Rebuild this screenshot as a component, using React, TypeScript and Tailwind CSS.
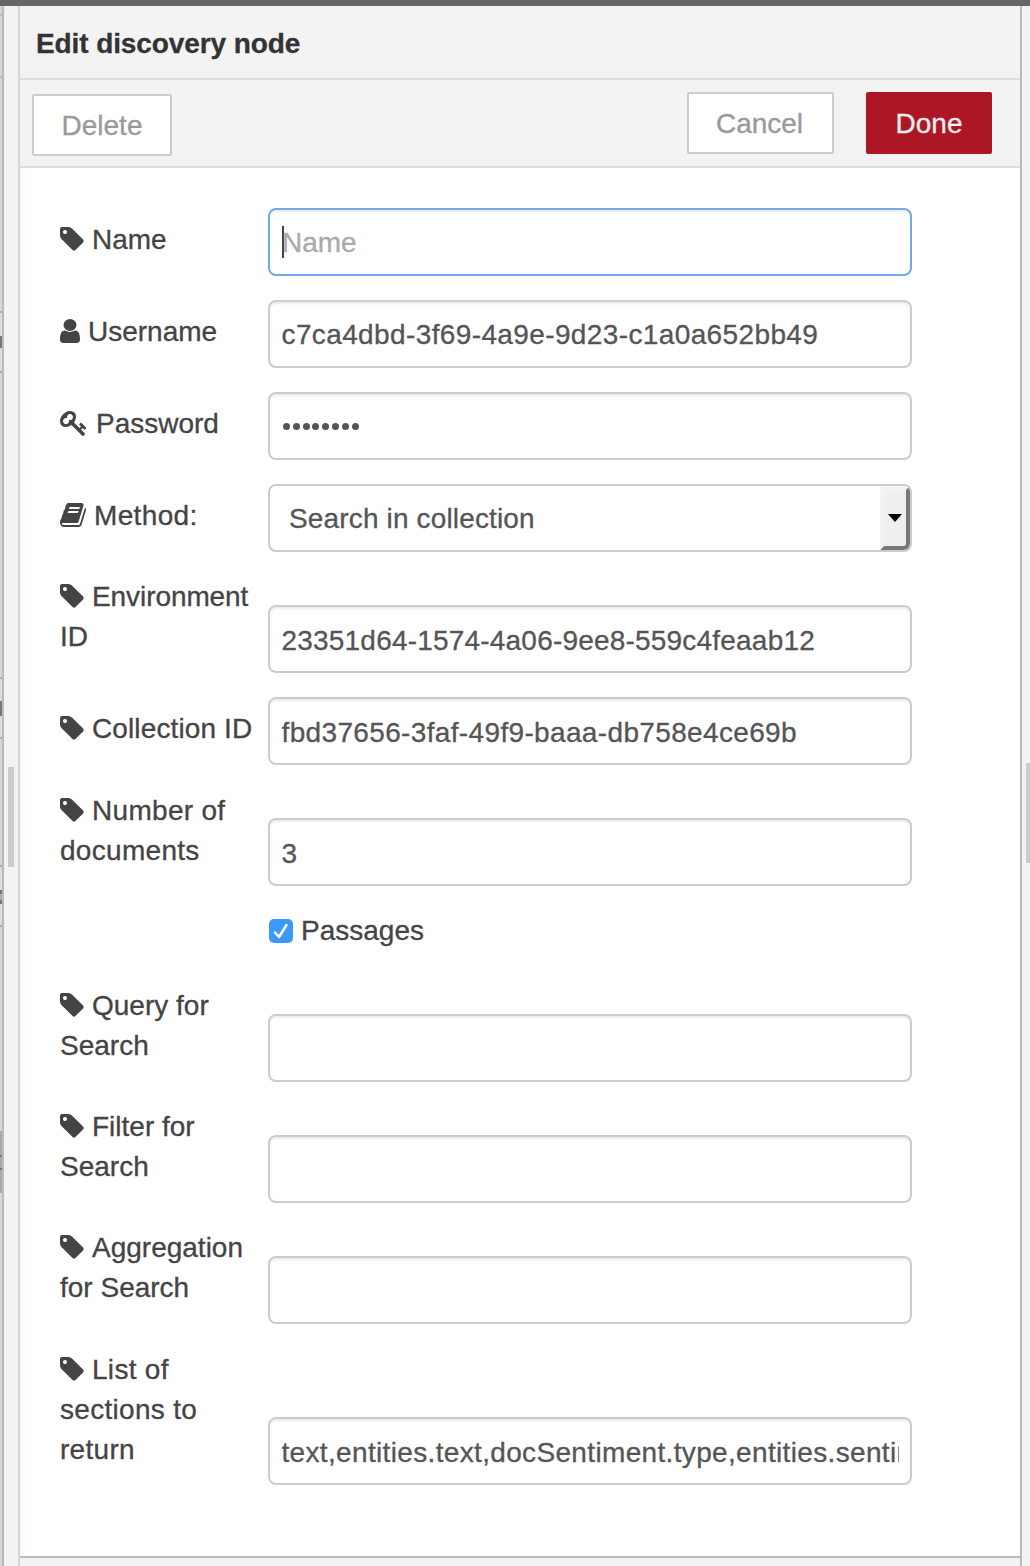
import React from "react";

const TAG =
  "M448 448q0-53-37.5-90.5t-90.5-37.5-90.5 37.5-37.5 90.5 37.5 90.5 90.5 37.5 90.5-37.5 37.5-90.5zm1067 576q0 53-37 90l-491 492q-39 37-91 37-53 0-90-37l-715-716q-38-37-64.5-101t-26.5-117v-416q0-52 38-90t90-38h416q53 0 117 26.5t102 64.5l715 714q37 39 37 91z";
const USER =
  "M1056 512a416 384 0 1 1-832 0a416 384 0 1 1 832 0zM320 870Q640 1060 960 870C1210 870 1280 1130 1280 1420Q1280 1664 1060 1664H220Q0 1664 0 1420C0 1130 70 870 320 870z";
const KEY =
  "M832 512q0-80-56-136t-136-56-136 56-56 136q0 42 19 83-41-19-83-19-80 0-136 56t-56 136 56 136 136 56 136-56 56-136q0-42-19-83 41 19 83 19 80 0 136-56t56-136zm851 704q0 17-49 66t-66 49q-9 0-28.5-16t-36.5-33-38.5-40-24.5-26l-96 96 220 220q28 28 28 68 0 42-39 81t-81 39q-40 0-68-28l-671-671q-176 131-365 131-163 0-265.5-102.5t-102.5-265.5q0-160 95-313t248-248 313-95q163 0 265.5 102.5t102.5 265.5q0 189-131 365l355 355 96-96q-3-3-26-24.5t-40-38.5-33-36.5-16-28.5q0-17 49-66t66-49q13 0 23 10 6 6 46 44.5t82 79.5 86.5 86 73 78 28.5 41z";
const BOOK =
  "M1639 478q40 57 18 129l-275 906q-19 64-76.5 107.5t-122.5 43.5h-923q-77 0-148.5-53.5t-99.5-131.5q-24-67-2-127 0-4 3-27t4-37q1-8-3-21.5t-3-19.5q2-11 8-21t16.5-23.5 16.5-23.5q23-38 45-91.5t30-91.5q3-10 .5-30t-.5-28q3-11 17-28t17-23q21-36 42-92t25-90q1-9-2.5-32t.5-28q4-13 22-30.5t22-22.5q19-26 42.5-84.5t27.5-96.5q1-8-3-25.5t-2-26.5q2-8 9-18t18-23 17-21q8-12 16.5-30.5t15-35 16-36 19.5-32 26.5-23.5 36-11.5 47.5 5.5l-1 3q38-9 51-9h761q74 0 114 56t18 130l-274 906q-36 119-71.5 153.5t-128.5 34.5h-869q-27 0-38 15-11 16-1 43 24 70 144 70h923q29 0 56-15.5t35-41.5l300-987q7-22 5-57 38 15 59 43zm-1064 2q-4 13 2 22.5t20 9.5h608q13 0 25.5-9.5t16.5-22.5l21-64q4-13-2-22.5t-20-9.5h-608q-13 0-25.5 9.5t-16.5 22.5zm-83 256q-4 13 2 22.5t20 9.5h608q13 0 25.5-9.5t16.5-22.5l21-64q4-13-2-22.5t-20-9.5h-608q-13 0-25.5 9.5t-16.5 22.5z";

function Icon({ d, w }: { d: string; w: number }) {
  return (
    <svg
      className="mr-2 inline-block h-7 align-[-4px]"
      style={{ width: w / 64 }}
      viewBox={`0 0 ${w} 1792`}
      fill="#444"
    >
      <path d={d} />
    </svg>
  );
}

interface RowProps {
  lines: string[];
  icon?: string;
  iconWidth?: number;
  offset?: string;
  spacing?: string;
  children: React.ReactNode;
}

function Row({
  lines,
  icon = TAG,
  iconWidth = 1536,
  offset = "pt-px mb-4",
  spacing = "",
  children,
}: RowProps) {
  return (
    <div className="flex items-end">
      <div className={`w-52 shrink-0 whitespace-nowrap leading-10 ${offset} ${spacing}`}>
        {lines.map((line, i) => (
          <div key={line} className="h-10">
            {i === 0 && <Icon d={icon} w={iconWidth} />}
            {line}
          </div>
        ))}
      </div>
      {children}
    </div>
  );
}

function Field({ value, spacing = "", pad = "pt-1" }: { value?: string; spacing?: string; pad?: string }) {
  return (
    <div
      className={`flex h-17 w-[644px] items-center rounded-lg border-2 border-[#ccc] pl-[11.5px] pr-[11px] text-[#555] shadow-[inset_0_2px_2px_rgba(0,0,0,0.075)] ${pad}`}
    >
      <div className={`w-full overflow-hidden whitespace-nowrap leading-10 ${spacing}`}>{value}</div>
    </div>
  );
}

export default function App() {
  return (
    <div className="relative flex h-[1566px] w-[1030px] flex-col overflow-hidden bg-[#f3f3f3] font-['Liberation_Sans',Arial,sans-serif] text-[28px] text-[#444] [-webkit-text-stroke:0.3px_currentColor]">
      <div className="h-1.5 shrink-0 bg-[#666]" />
      <div className="flex flex-1">
        <div className="relative w-1 border-r-2 border-[#bbb] bg-[#d6d6d6]">
          <div className="absolute top-[8px] h-0.5 w-0.5 bg-[#bbb]" />
          <div className="absolute top-[70px] h-0.5 w-0.5 bg-[#bbb]" />
          <div className="absolute top-[305px] h-[62px] w-0.5 border-y-2 border-[#aaa] bg-[#ddd]" />
          <div className="absolute top-[330px] h-[12px] w-0.5 bg-[#777]" />
          <div className="absolute top-[671px] h-[62px] w-0.5 border-y-2 border-[#aaa] bg-[#ddd]" />
          <div className="absolute top-[695px] h-[15px] w-0.5 bg-[#777]" />
          <div className="absolute top-[859px] h-[62px] w-0.5 border-y-2 border-[#aaa] bg-[#ddd]" />
          <div className="absolute top-[884px] h-[14px] w-0.5 border-y-4 border-[#777] bg-[#aaa]" />
          <div className="absolute top-[1125px] h-[62px] w-0.5 bg-[#a3b09f]" />
          <div className="absolute top-[1149px] h-[15px] w-0.5 border-y-2 border-[#777]" />
        </div>
        <div className="w-3.5 pl-1 pt-[761px]">
          <div className="h-[100px] w-1.5 bg-[#ccc]" />
        </div>
        <div className="flex w-[1004px] flex-col border-x-2 border-l-[#d6d6d6] border-r-[#bbb]">
          <div className="flex h-[74px] items-center border-b-2 border-[#ddd] pl-4 pt-[3px] font-bold text-[#333]">
            <span className="leading-10 tracking-[-0.1px]">Edit discovery node</span>
          </div>
          <div className="flex h-22 items-start border-b-2 border-[#ddd] pl-3 pr-7 pt-3 text-[#999]">
            <button className="mt-0.5 h-[62px] w-[140px] rounded-xs border-2 border-[#ccc] bg-white pt-0.5">Delete</button>
            <button className="ml-auto mr-8 h-[62px] w-[147px] rounded-xs border-2 border-[#ccc] bg-white pr-0.5 pt-0.5">Cancel</button>
            <button className="h-[62px] w-[126px] rounded-xs bg-[#ad1625] pt-0.5 text-[#eee]">Done</button>
          </div>
          <div className="flex h-[1390px] flex-col gap-6 border-b-2 border-[#bbb] bg-white pl-10 pt-10 shadow-[inset_6px_0_6px_-4px_rgba(0,0,0,0.05)]">
            <Row lines={["Name"]}>
              <div className="flex h-17 w-[644px] items-center rounded-lg border-2 border-[#74a8e8] pl-3 shadow-[inset_0_2px_2px_rgba(0,0,0,0.075)]">
                <span className="h-8 w-0.5 bg-[#444]" />
                <span className="-ml-0.5 pt-0.5 text-[#aaa]">Name</span>
              </div>
            </Row>
            <Row lines={["Username"]} icon={USER} iconWidth={1280}>
              <Field value="c7ca4dbd-3f69-4a9e-9d23-c1a0a652bb49" spacing="tracking-[0.38px]" pad="pt-0.5" />
            </Row>
            <Row lines={["Password"]} icon={KEY} iconWidth={1792}>
              <div className="flex h-17 w-[644px] items-center gap-[2.8px] rounded-lg border-2 border-[#ccc] px-[13px] shadow-[inset_0_2px_2px_rgba(0,0,0,0.075)]">
                {Array.from({ length: 8 }, (_, i) => (
                  <span key={i} className="size-[7px] rounded-full bg-[#555]" />
                ))}
              </div>
            </Row>
            <Row lines={["Method:"]} icon={BOOK} iconWidth={1664} spacing="tracking-[0.35px]">
              <div className="flex h-17 w-[644px] items-center overflow-hidden rounded-lg border-2 border-[#ccc] pl-[19px] text-[#555]">
                <span className="pt-0.5 tracking-[0.15px]">Search in collection</span>
                <div className="ml-auto flex h-full w-[30px] items-center justify-center rounded-br-md border-4 border-l-[#f3f3f3] border-t-[#f3f3f3] border-b-[#777] border-r-[#777] bg-[#efefef]">
                  <svg width="14" height="8" viewBox="0 0 14 8">
                    <path d="M0 0h14L7 8z" />
                  </svg>
                </div>
              </div>
            </Row>
            <Row lines={["Environment", "ID"]} spacing="tracking-[-0.08px]">
              <Field value="23351d64-1574-4a06-9ee8-559c4feaab12" spacing="tracking-[0.2px]" />
            </Row>
            <Row lines={["Collection ID"]} spacing="tracking-[0.12px]">
              <Field value="fbd37656-3faf-49f9-baaa-db758e4ce69b" spacing="tracking-[0.35px]" />
            </Row>
            <Row lines={["Number of", "documents"]} offset="pt-0.5 mb-[15px]" spacing="tracking-[0.3px]">
              <Field value="3" />
            </Row>
            <div className="flex h-[51px] items-start pl-[209px] leading-10">
              <div className="mr-2 mt-[9px] flex size-6 items-center justify-center rounded-[5px] bg-[#3b99fc]">
                <svg width="16" height="18" viewBox="0 0 16 18" fill="none" stroke="white" strokeWidth="2.5" strokeLinecap="round" strokeLinejoin="round">
                  <path d="M2 10.5L6 15L13.5 3" />
                </svg>
              </div>
              <span className="pt-px">Passages</span>
            </div>
            <Row lines={["Query for", "Search"]}>
              <Field />
            </Row>
            <Row lines={["Filter for", "Search"]}>
              <Field />
            </Row>
            <Row lines={["Aggregation", "for Search"]}>
              <Field />
            </Row>
            <Row lines={["List of", "sections to", "return"]} offset="pt-0.5 mb-[15px]" spacing="tracking-[0.3px]">
              <Field value="text,entities.text,docSentiment.type,entities.sentiment" spacing="tracking-[0.34px]" />
            </Row>
          </div>
        </div>
      </div>
      <div className="absolute right-0 top-[763px] h-[100px] w-1 bg-[#ccc]" />
    </div>
  );
}
